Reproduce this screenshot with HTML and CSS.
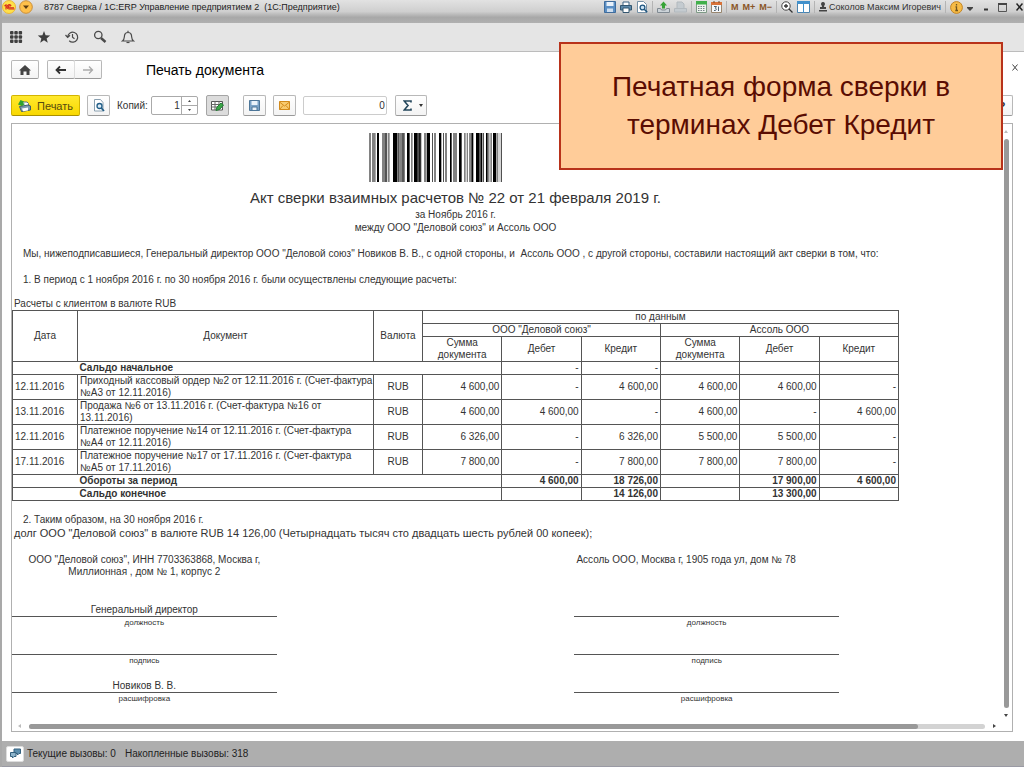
FILE: index.html
```html
<!DOCTYPE html>
<html lang="ru">
<head>
<meta charset="utf-8">
<title>Печать документа</title>
<link rel="stylesheet" href="styles.css">
</head>
<body>
<div class="app">
  <header class="titlebar">
    <svg class="logo" width="14" height="14" viewBox="0 0 14 14"><circle cx="7" cy="7" r="6.5" fill="#ffe14a" stroke="#e8b63a"/><path d="M2.5 6 4 4.8V9.5M9.2 5.8A2.2 2.2 0 1 0 7.5 9H12.5M8.3 6.6A1 1 0 1 0 7.4 7.8H12" fill="none" stroke="#d62a1e" stroke-width="1.1"/></svg>
    <button class="flat" aria-label="Главное меню"><svg width="14" height="14" viewBox="0 0 14 14"><circle cx="7" cy="7" r="6.3" fill="#ffc04a" stroke="#c98f3c"/><path d="M4 5.5h6L7 9z" fill="#5a3b12"/></svg></button>
    <span class="app-title">8787 Сверка / 1С:ERP Управление предприятием 2&nbsp; (1С:Предприятие)</span>
    <div class="tools">
      <button class="flat" aria-label="Сохранить"><svg width="12" height="12" viewBox="0 0 12 12"><path d="M.5.5h11v11H.5z" fill="#5b8fc4" stroke="#3f6c9c"/><path d="M2.5 1h7v4h-7z" fill="#e8f1fa"/><path d="M3 7.5h6V11H3z" fill="#cfdeee"/></svg></button>
      <button class="flat" aria-label="Печать"><svg width="12" height="12" viewBox="0 0 12 12"><path d="M3 4V1h6v3" fill="#fff" stroke="#3c6485"/><path d="M.5 4.5h11V9H.5z" fill="#5b88aa" stroke="#33566f"/><path d="M3 7h6v4.5H3z" fill="#fff" stroke="#33566f"/></svg></button>
      <button class="flat" aria-label="Просмотр"><svg width="12" height="12" viewBox="0 0 12 12"><path d="M1.5.5h6l3 3v8h-9z" fill="#fff" stroke="#7590a5"/><circle cx="6.5" cy="6.5" r="2.4" fill="#cde4f5" stroke="#1f5680" stroke-width="1.3"/><path d="m8.3 8.3 2.9 3" stroke="#1f5680" stroke-width="1.6"/></svg></button>
      <i class="sep"></i>
      <button class="flat" aria-label="Добавить в избранное"><svg width="13" height="12" viewBox="0 0 13 12"><path d="M.5 7.5h3l1 1.5h4l1-1.5h3v4H.5z" fill="#ccd3d8" stroke="#808a92"/><path d="M5 7.500V4.500H3L6.500.5 10 4.500H8v3z" fill="#36a336"/></svg></button>
      <button class="flat" disabled aria-label="Получить ссылку"><svg width="13" height="12" viewBox="0 0 13 12"><path d="M3 7V1h5l2 2v4M.5 7.500h12v3.500H.5z" fill="#c4cbd0" stroke="#b2b9be"/></svg></button>
      <i class="sep"></i>
      <button class="flat" aria-label="Калькулятор"><svg width="11" height="12" viewBox="0 0 11 12"><path d="M.5.5h10v11H.5z" fill="#eef3ee" stroke="#7e9a86"/><path d="M0 0h11v3.500H0z" fill="#41b04b"/><path d="M2 5.500h7M2 7.500h7M2 9.500h7" stroke="#76828a" stroke-dasharray="1.500 1"/></svg></button>
      <button class="flat" aria-label="Календарь"><svg width="11" height="12" viewBox="0 0 11 12"><path d="M.5 1.500h10v10H.5z" fill="#f5f8fa" stroke="#98866f"/><path d="M0 1h11v3H0z" fill="#d9733a"/><path d="M3 0v2M8 0v2" stroke="#7a4a28"/><path d="M3 5.500h2.500l-1.200 1.700c2 .3 1 2.800-1.300 2.300M7.500 5.500v4.500" fill="none" stroke="#4d6274"/></svg></button>
      <i class="sep"></i>
      <button class="flat mem">M</button>
      <button class="flat mem">M+</button>
      <button class="flat mem">M−</button>
      <i class="sep"></i>
      <button class="flat" aria-label="Масштаб"><svg width="12" height="12" viewBox="0 0 12 12"><circle cx="5" cy="5" r="4.200" fill="#fff" stroke="#444"/><path d="M3 5h4M5 3v4M8 8l3.500 3.500" stroke="#333" stroke-width="1.300"/></svg></button>
      <button class="flat" aria-label="Панели"><svg width="13" height="12" viewBox="0 0 13 12"><path d="M.5.5h12v11H.5z" fill="#fff" stroke="#4c83ad"/><path d="M0 0h13v3H0zM6 0h1v12H6z" fill="#4191cc"/></svg></button>
      <i class="sep"></i>
      <button class="flat user"><svg width="8" height="10" viewBox="0 0 8 10"><path d="M4 0a2 2 0 0 1 1.300 3.500L5 5h2v2H1V5h2l-.3-1.500A2 2 0 0 1 4 0zM0 8h8v1.500H0z" fill="#444"/></svg>Соколов Максим Игоревич</button>
      <i class="sep"></i>
      <button class="flat" aria-label="О программе"><svg width="13" height="13" viewBox="0 0 13 13"><circle cx="6.500" cy="6.500" r="5.900" fill="#f6bb45" stroke="#c1852a"/><path d="M6.500 3v1.500M5.500 5.800h1v4M5.300 9.500h2.700" fill="none" stroke="#70541f" stroke-width="1.300"/></svg></button>
      <button class="flat" aria-label="Ещё"><svg width="6" height="8" viewBox="0 0 6 8"><path d="M0 4h6v1L3 8 0 5z" fill="#444"/></svg></button>
    </div>
    <div class="window-buttons">
      <button class="flat" aria-label="Свернуть"><svg width="6" height="10" viewBox="0 0 6 10"><path d="M1 7.500h4" stroke="#333" stroke-width="2"/></svg></button>
      <button class="flat" aria-label="Развернуть"><svg width="9" height="9" viewBox="0 0 9 9"><path d="M.5 1h8v7.500h-8z" fill="none" stroke="#555"/><path d="M0 1h9" stroke="#444" stroke-width="2"/></svg></button>
      <button class="flat" aria-label="Закрыть окно"><svg width="7" height="8" viewBox="0 0 7 8"><path d="m.5.500 6 7m0-7-6 7" stroke="#222" stroke-width="1.500"/></svg></button>
    </div>
  </header>

  <nav class="sections">
    <button class="flat" aria-label="Меню функций"><svg width="14" height="14" viewBox="0 0 14 14" fill="#3f3f3f"><rect x="1" y="1" width="3.500" height="3.500" rx="1"/><rect x="5.300" y="1" width="3.500" height="3.500" rx="1"/><rect x="9.600" y="1" width="3.500" height="3.500" rx="1"/><rect x="1" y="5.300" width="3.500" height="3.500" rx="1"/><rect x="5.300" y="5.300" width="3.500" height="3.500" rx="1"/><rect x="9.600" y="5.300" width="3.500" height="3.500" rx="1"/><rect x="1" y="9.600" width="3.500" height="3.500" rx="1"/><rect x="5.300" y="9.600" width="3.500" height="3.500" rx="1"/><rect x="9.600" y="9.600" width="3.500" height="3.500" rx="1"/></svg></button>
    <button class="flat" aria-label="Избранное"><svg width="14" height="14" viewBox="0 0 14 14"><path d="m7 1 1.600 4.300 4.600.2-3.600 2.900 1.200 4.400L7 10.300l-3.800 2.500 1.200-4.400L.8 5.500l4.600-.2z" fill="#3f3f3f"/></svg></button>
    <button class="flat" aria-label="История"><svg width="14" height="14" viewBox="0 0 14 14" fill="none" stroke="#4a4a4a" stroke-width="1.200"><path d="M2.700 6.500a5 5 0 1 1 1.500 4.300M.5 5l2.200 2.500L5 5.300M7.500 4v3.300l2 1.500"/></svg></button>
    <button class="flat" aria-label="Поиск"><svg width="14" height="14" viewBox="0 0 14 14" fill="none" stroke="#4a4a4a"><circle cx="5.300" cy="5" r="3.700" stroke-width="1.300"/><path d="m8 8 4.500 4" stroke-width="2.400"/></svg></button>
    <button class="flat" aria-label="Уведомления"><svg width="14" height="14" viewBox="0 0 14 14" fill="none" stroke="#4a4a4a" stroke-width="1.200"><path d="M1.500 11c2-1.500 1.700-3 2-5.500.2-2 1.500-3 3.500-3s3.300 1 3.500 3c.3 2.500 0 4 2 5.500zM7 2.500V.8"/><path d="M5.500 12.500h3"/></svg></button>
  </nav>

  <main class="form">
    <div class="heading">
      <button class="btn home" aria-label="На главную"><svg width="12" height="10" viewBox="0 0 12 10"><path d="M6 0 12 5.500h-1.500V10h-3V6.500h-3V10h-3V5.500H0z" fill="#444"/></svg></button>
      <div class="history">
        <button class="btn" aria-label="Назад"><svg width="12" height="10" viewBox="0 0 12 10"><path d="M1.500 5H11M5 1.500 1.500 5 5 8.500" fill="none" stroke="#333" stroke-width="1.800"/></svg></button>
        <button class="btn" aria-label="Вперёд"><svg width="12" height="10" viewBox="0 0 12 10"><path d="M1 5h9.500M7 1.500 10.500 5 7 8.500" fill="none" stroke="#aaa" stroke-width="1.300"/></svg></button>
      </div>
      <h1>Печать документа</h1>
      <button class="flat close" aria-label="Закрыть"><svg width="6" height="7" viewBox="0 0 6 7"><path d="m.5.500 5 6m0-6-5 6" stroke="#444"/></svg></button>
    </div>

    <div class="commands">
      <button class="btn print"><svg width="13" height="12" viewBox="0 0 13 12"><path d="M4 6V2h5l1.500 1.500V6" fill="#fff" stroke="#5b7280"/><path d="M1.500 6.500 10 5l2.500 1v4l-9 1.500z" fill="#7d9cae" stroke="#3f5c6e"/><path d="M4 8.500 10 7.500v3l-5 .8z" fill="#fff"/><path d="M0 4.500 2.500 0 6 1.500 5 3l2 1-3 2z" fill="#2fa32f"/></svg>Печать</button>
      <button class="btn square" aria-label="Предварительный просмотр"><svg width="12" height="13" viewBox="0 0 12 13"><path d="M1.500.500h6l2.500 3v8.500H1.500z" fill="#fff" stroke="#8aa0b0"/><circle cx="6.500" cy="7" r="2.500" fill="#dcecf7" stroke="#215d86" stroke-width="1.300"/><path d="m8.300 9 2.700 3" stroke="#215d86" stroke-width="1.800"/></svg></button>
      <label class="copies" for="copies">Копий:</label>
      <div class="spinner"><input id="copies" type="text" value="1"><div class="steps"><button class="flat" aria-label="Больше"><svg width="3" height="2" viewBox="0 0 3 2"><path d="M0 2 1.500 0 3 2z" fill="#444"/></svg></button><button class="flat" aria-label="Меньше"><svg width="3" height="2" viewBox="0 0 3 2"><path d="M0 0h3L1.500 2z" fill="#444"/></svg></button></div></div>
      <button class="btn square pressed" aria-label="Редактирование"><svg width="13" height="12" viewBox="0 0 13 12"><path d="M.5 1.500h11v8.500H.5z" fill="#fff" stroke="#555"/><path d="M0 4.500h12M0 7h12M4 1v9M8 1v9" stroke="#666"/><path d="M5 10.500 6 7l4-4 2.500 2-4 4.500z" fill="#3aa847" stroke="#267a36"/></svg></button>
      <button class="btn square save" aria-label="Сохранить документ"><svg width="11" height="11" viewBox="0 0 11 11"><path d="M.5.500h10v10H.5z" fill="#7ba3c7" stroke="#4d7698"/><path d="M2.500 1h6v4h-6z" fill="#eaf3fa"/><path d="M3 7h5v3.500H3z" fill="#eaf3fa" stroke="#4d7698"/></svg></button>
      <button class="btn square" aria-label="Отправить по почте"><svg width="11" height="9" viewBox="0 0 11 9"><path d="M.5.500h10v8H.5z" fill="#f9cb70" stroke="#d28a1c"/><path d="m.500 1 5 4 5-4M.5 8.500 4 4.500M10.500 8.500 7 4.500" fill="none" stroke="#d28a1c"/></svg></button>
      <input class="total" type="text" value="0" aria-label="Сумма ячеек">
      <button class="btn sigma" aria-label="Сумма"><svg width="9" height="11" viewBox="0 0 9 11"><path d="M8 2.500V1H1.200L5 5.500 1.200 10H8V8.500" fill="none" stroke="#24475c" stroke-width="1.600"/></svg><svg width="4" height="3" viewBox="0 0 4 3"><path d="M0 0h4L2 3z" fill="#333"/></svg></button>
      <button class="btn help" aria-label="Справка">?</button>
    </div>

    <section class="viewer">
      <article class="sheet">
        <svg class="barcode" width="133" height="49" viewBox="57 0 399 49" preserveAspectRatio="none">
          <path fill="#828282" d="M57 0h6v49h-6zM66 0h11v49h-11zM96 0h9v49h-9zM113 0h6v49h-6zM150 0h15v49h-15zM183 0h5v49h-5zM222 0h8v49h-8zM252 0h6v49h-6zM285 0h6v49h-6zM309 0h12v49h-12zM342 0h5v49h-5zM350 0h4v49h-4zM421 0h5v49h-5zM439 0h6v49h-6zM449 0h2v49h-2z"/>
          <path fill="#505050" d="M143 0h6v49h-6zM203 0h11v49h-11zM246 0h3v49h-3zM279 0h3v49h-3zM358 0h4v49h-4zM399 0h3v49h-3zM415 0h3v49h-3zM453 0h3v49h-3z"/>
          <path fill="#000" d="M81 0h6v49h-6zM106 0h4v49h-4zM129 0h13v49h-13zM158 0h2v49h-2zM171 0h8v49h-8zM192 0h11v49h-11zM208 0h3v49h-3zM231 0h9v49h-9zM267 0h7v49h-7zM300 0h5v49h-5zM327 0h8v49h-8zM364 0h6v49h-6zM378 0h11v49h-11zM391 0h6v49h-6zM408 0h5v49h-5zM429 0h9v49h-9z"/>
        </svg>
        <h2>Акт сверки взаимных расчетов № 22 от 21 февраля 2019 г.</h2>
        <p class="sub">за Ноябрь 2016 г.</p>
        <p class="sub">между ООО "Деловой союз" и Ассоль ООО</p>
        <p class="para">Мы, нижеподписавшиеся, Генеральный директор ООО "Деловой союз" Новиков В. В., с одной стороны, и&nbsp; Ассоль ООО , с другой стороны, составили настоящий акт сверки в том, что:</p>
        <p class="para">1. В период с 1 ноября 2016 г. по 30 ноября 2016 г. были осуществлены следующие расчеты:</p>
        <table>
          <caption>Расчеты с клиентом в валюте RUB</caption>
          <colgroup><col class="c-date"><col class="c-doc"><col class="c-cur"><col class="c-sum" span="6"></colgroup>
          <thead>
            <tr><th rowspan="3">Дата</th><th rowspan="3">Документ</th><th rowspan="3">Валюта</th><th colspan="6">по данным</th></tr>
            <tr><th colspan="3">ООО "Деловой союз"</th><th colspan="3">Ассоль ООО</th></tr>
            <tr><th>Сумма документа</th><th>Дебет</th><th>Кредит</th><th>Сумма документа</th><th>Дебет</th><th>Кредит</th></tr>
          </thead>
          <tbody>
            <tr><td class="open"></td><td class="doc strong" colspan="3">Сальдо начальное</td><td>-</td><td>-</td><td></td><td></td><td></td></tr>
            <tr><td class="date">12.11.2016</td><td class="doc">Приходный кассовый ордер №2 от 12.11.2016 г. (Счет-фактура №А3 от 12.11.2016)</td><td class="cur">RUB</td><td>4 600,00</td><td>-</td><td>4 600,00</td><td>4 600,00</td><td>4 600,00</td><td>-</td></tr>
            <tr><td class="date">13.11.2016</td><td class="doc">Продажа №6 от 13.11.2016 г. (Счет-фактура №16 от 13.11.2016)</td><td class="cur">RUB</td><td>4 600,00</td><td>4 600,00</td><td>-</td><td>4 600,00</td><td>-</td><td>4 600,00</td></tr>
            <tr><td class="date">12.11.2016</td><td class="doc">Платежное поручение №14 от 12.11.2016 г. (Счет-фактура №А4 от 12.11.2016)</td><td class="cur">RUB</td><td>6 326,00</td><td>-</td><td>6 326,00</td><td>5 500,00</td><td>5 500,00</td><td>-</td></tr>
            <tr><td class="date">17.11.2016</td><td class="doc">Платежное поручение №17 от 17.11.2016 г. (Счет-фактура №А5 от 17.11.2016)</td><td class="cur">RUB</td><td>7 800,00</td><td>-</td><td>7 800,00</td><td>7 800,00</td><td>7 800,00</td><td>-</td></tr>
          </tbody>
          <tfoot>
            <tr><td class="open"></td><td class="doc strong" colspan="3">Обороты за период</td><td>4 600,00</td><td>18 726,00</td><td></td><td>17 900,00</td><td>4 600,00</td></tr>
            <tr><td class="open"></td><td class="doc strong" colspan="3">Сальдо конечное</td><td></td><td>14 126,00</td><td></td><td>13 300,00</td><td></td></tr>
          </tfoot>
        </table>
        <p class="para result">2. Таким образом, на 30 ноября 2016 г.</p>
        <p class="debt">долг ООО "Деловой союз" в валюте RUB 14 126,00 (Четырнадцать тысяч сто двадцать шесть рублей 00 копеек);</p>
        <div class="parties">
          <section class="party">
            <p class="address">ООО "Деловой союз", ИНН 7703363868, Москва г, Миллионная , дом № 1, корпус 2</p>
            <dl><dd>Генеральный директор</dd><dt>должность</dt><dd></dd><dt>подпись</dt><dd>Новиков В. В.</dd><dt>расшифровка</dt></dl>
          </section>
          <section class="party second">
            <p class="address">Ассоль ООО, Москва г, 1905 года ул, дом № 78</p>
            <dl><dd></dd><dt>должность</dt><dd></dd><dt>подпись</dt><dd></dd><dt>расшифровка</dt></dl>
          </section>
        </div>
      </article>
      <div class="vscroll"><span class="arrow up"></span><span class="thumb"></span><span class="arrow down"></span></div>
      <div class="hscroll"><span class="arrow left"></span><span class="track"><span class="thumb"></span></span><span class="arrow right"></span></div>
    </section>
  </main>

  <footer class="status">
    <button class="calls" aria-label="Вызовы сервера"><svg width="11" height="11" viewBox="0 0 11 11"><path d="M4 1h6.500v4.500H9L7.500 7V5.500H4z" fill="#5d8fae" stroke="#34617f"/><path d="M.5 4.500H6V8.500H4L2.500 10V8.500h-2z" fill="#8fb5cc" stroke="#34617f"/></svg></button>
    <span>Текущие вызовы: 0</span><span>Накопленные вызовы: 318</span>
  </footer>
  <aside class="callout">Печатная форма сверки в терминах Дебет Кредит</aside>
</div>
</body>
</html>
```
FILE: styles.css
```css
* { box-sizing: border-box; }
body { margin: 0; font-family: "Liberation Sans", Arial, sans-serif; font-size: 10px; color: #333; background: #fff; }
button, input { font: inherit; color: inherit; }
h1, h2, p, dl, dd { margin: 0; font-weight: normal; }
svg { display: block; flex: none; }
.app { position: relative; display: flex; flex-direction: column; min-height: 100vh; border-left: 2px solid #a9a9a9; }
.flat { display: flex; align-items: center; justify-content: center; padding: 0; border: 0; background: none; }

.titlebar { display: flex; align-items: flex-start; height: 23px; padding: 0 1px 0 0; font-family: "Liberation Sans", Arial, sans-serif; font-size: 9px; background: linear-gradient(#e2e2e2, #cfcfcf 50%, #a8a8a8 75%, #b0b0b0); }
.titlebar > .flat { margin-left: 3px; }
.app-title { margin-left: 11px; line-height: 14px; white-space: nowrap; color: #222; }
.tools { display: flex; align-items: center; gap: 4px; height: 14px; margin-left: auto; }
.tools .sep { width: 1px; height: 12px; background: #b4b4b4; }
.mem { font-weight: bold; color: #8a5526; }
.user { gap: 2px; white-space: nowrap; color: #333; }
.window-buttons { display: flex; align-items: center; gap: 9px; height: 14px; margin-left: 10px; }

.sections { display: flex; align-items: center; gap: 14px; height: 29px; padding: 0 7px; background: #e5e5e5; border-bottom: 1px solid #bcbcbc; }

.form { flex: 1; display: flex; flex-direction: column; padding: 8px 11px 9px 9px; background: #fff; }
.btn { display: flex; align-items: center; justify-content: center; padding: 0; border: 1px solid #b8b8b8; border-bottom-color: #999; border-radius: 2px; background: linear-gradient(#fff, #f3f3f3); }
.heading { display: flex; align-items: center; height: 19px; }
.heading .btn { height: 19px; width: 28px; }
.history { display: flex; margin-left: 8px; }
.history .btn + .btn { border-left-color: #ddd; margin-left: -1px; border-radius: 0 2px 2px 0; }
h1 { margin-left: 44px; font-size: 14px; color: #000; }
.close { margin: 0 -6px 4px auto; width: 8px; }

.commands { display: flex; align-items: center; height: 21px; margin-top: 16px; }
.commands .btn { height: 21px; }
.commands .print { gap: 6px; width: 69px; font-size: 11px; background: linear-gradient(#ffe92e, #f9d800); border-color: #d3b400; border-bottom-color: #a99000; color: #554a10; }
.commands .square { width: 23px; margin-left: 7px; }
.copies { margin-left: 7px; }
.spinner { display: flex; width: 47px; height: 19px; margin-left: 3px; border: 1px solid #aaa; border-radius: 2px; background: #fff; }
.spinner input { flex: 1; min-width: 0; padding: 0 1px; border: 0; text-align: right; background: none; }
.steps { display: flex; flex-direction: column; width: 16px; border-left: 1px solid #aaa; }
.steps .flat { flex: 1; }
.steps .flat + .flat { border-top: 1px solid #aaa; }
.commands .pressed { background: #dcdcdc; border-color: #a5a5a5; margin-left: 8px; }
.commands .save { margin-left: 14px; }
.total { width: 84px; height: 19px; margin-left: 7px; padding: 0 1px; border: 1px solid #ccc; border-radius: 2px; text-align: right; }
.commands .sigma { gap: 7px; width: 32px; margin-left: 8px; padding-left: 4px; }
.commands .help { width: 22px; margin-left: auto; font-weight: bold; font-size: 11px; }

.viewer { flex: 1; display: grid; grid-template-columns: minmax(0, 1fr) 12px; grid-template-rows: 1fr 10px; margin-top: 7px; border: 1px solid #b0b0b0; }
.sheet { padding: 9px 101px 12px 0; }
.barcode { margin-left: calc(50% - 87px); }
h2 { margin-top: 6px; font-size: 15px; line-height: 20px; text-align: center; }
.sub { line-height: 13px; text-align: center; }
.para { margin-top: 13px; padding-left: 11px; line-height: 13px; white-space: nowrap; }
table { width: 100%; margin-top: 12px; border-collapse: collapse; table-layout: fixed; }
caption { padding-left: 2px; line-height: 12px; text-align: left; }
.c-date { width: 65px; }
.c-doc { width: 296px; }
.c-cur { width: 49px; }
th, td { padding: 0 2px; border: 1px solid #555; line-height: 12px; font-weight: normal; }
th { text-align: center; }
td { height: 13px; text-align: right; }
.date, .doc { text-align: left; }
.doc { padding-right: 0; }
.cur { text-align: center; }
.strong, tfoot td { font-weight: bold; }
.open { border-right-style: hidden; }
.result { margin-top: 12px; }
.debt { padding-left: 2px; font-size: 11px; line-height: 14px; }
.parties { display: grid; grid-template-columns: 32% 32%; justify-content: space-between; margin: 14px 60px 0 0; }
.party { text-align: center; }
.address { min-height: 37px; padding: 0 12px; line-height: 12px; }
.second .address { padding: 0 2px; text-align: left; }
dl { line-height: 12px; }
dd { display: flex; align-items: flex-end; justify-content: center; height: 26px; border-bottom: 1px solid #555; }
dt { height: 12px; font-size: 8px; line-height: 11px; }

.vscroll { display: flex; flex-direction: column; align-items: center; gap: 6px; padding: 6px 0 4px; }
.thumb { display: block; border-radius: 3px; background: #999; }
.vscroll .thumb { flex: 1; width: 5px; }
.hscroll { grid-column: 1 / 3; display: flex; align-items: center; gap: 8px; padding: 0 16px 0 6px; }
.track { flex: 1; height: 5px; border-radius: 3px; background: #d3d3d3; }
.hscroll .thumb { width: 93%; height: 5px; }
.arrow { border: 2px solid transparent; }
.up { border-bottom: 3px solid #bbb; border-top: 0; }
.down { border-top: 3px solid #444; border-bottom: 0; }
.left { border-right: 3px solid #bbb; border-left: 0; }
.right { border-left: 3px solid #444; border-right: 0; }

.status { display: flex; align-items: center; gap: 9px; height: 26px; padding: 0 4px; background: #aeaeae; border-bottom: 1px solid #9a9aa4; color: #222; }
.calls { display: flex; align-items: center; justify-content: center; width: 18px; height: 16px; margin-right: -6px; padding: 0; border: 1px solid #ddd; border-radius: 2px; background: #fff; }

.callout { position: absolute; top: 42px; right: 21px; width: 444px; padding: 24px 30px; border: 2px solid #b8321a; background: #fc9; color: #5a0c02; font-size: 28px; line-height: 38px; text-align: center; }
```
